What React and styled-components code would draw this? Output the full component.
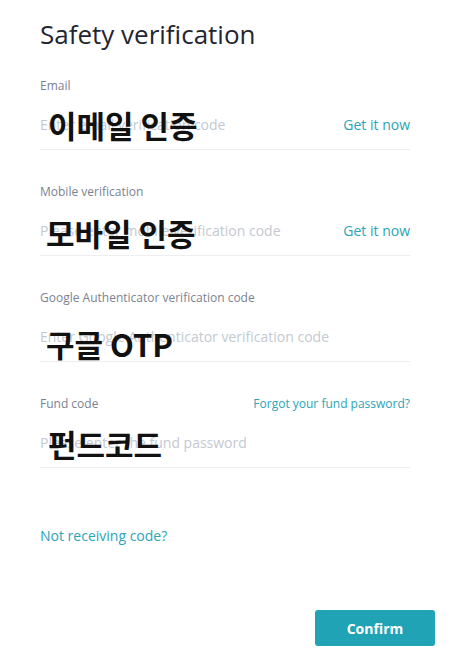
import React from "react";
import styled, { createGlobalStyle } from "styled-components";

const Global = createGlobalStyle`
  html, body { margin: 0; padding: 0; background: #fff; }
  body { font-family: "Open Sans", "Noto Sans", sans-serif; }
  * { box-sizing: border-box; }
`;

const Page = styled.div`
  width: 450px;
  height: 660px;
  display: flex;
  flex-direction: column;
  background: #fff;
`;

const Form = styled.div`
  padding: 0 40px;
  display: flex;
  flex-direction: column;
`;

const Title = styled.h1`
  margin: 18px 0 0;
  font-size: 26px;
  line-height: 32px;
  font-weight: 400;
  color: #1f2631;
`;

const Sections = styled.div`
  margin-top: 28px;
  display: flex;
  flex-direction: column;
  gap: 34px;
`;

const Section = styled.div`
  display: flex;
  flex-direction: column;
`;

const LabelRow = styled.div`
  display: flex;
  justify-content: space-between;
  align-items: center;
  height: 16px;
`;

const Label = styled.span`
  font-size: 12px;
  line-height: 16px;
  color: #7b8391;
`;

const SmallLink = styled.a`
  font-size: 12px;
  line-height: 16px;
  color: #2ba4b6;
  text-decoration: none;
  cursor: pointer;
`;

const Field = styled.div`
  position: relative;
  margin-top: 6px;
  height: 50px;
  display: flex;
  align-items: center;
  border-bottom: 1px solid #eceef1;
`;

const Input = styled.input`
  flex: 1;
  min-width: 0;
  border: none;
  outline: none;
  padding: 0;
  background: transparent;
  font-family: "Open Sans", sans-serif;
  font-size: 14px;
  line-height: 20px;
  color: #1f2631;
  &::placeholder { color: #c4c9d1; }
`;

const Action = styled.a`
  font-size: 14px;
  line-height: 20px;
  color: #2ba4b6;
  text-decoration: none;
  cursor: pointer;
  white-space: nowrap;
`;

const Overlay = styled.span`
  position: absolute;
  left: ${(p) => p.$dx}px;
  top: 50%;
  transform: translateY(calc(-50% + ${(p) => p.$dy}px));
  font-family: "Noto Sans CJK KR", "Noto Sans", sans-serif;
  font-weight: 700;
  font-size: 31px;
  line-height: 1;
  color: #111;
  white-space: nowrap;
  pointer-events: none;
`;

const Help = styled.a`
  margin-top: 58px;
  font-size: 14px;
  line-height: 20px;
  color: #2ba4b6;
  text-decoration: none;
  cursor: pointer;
`;

const Footer = styled.div`
  margin-top: 64px;
  padding: 0 15px;
  display: flex;
  justify-content: flex-end;
`;

const Button = styled.button`
  width: 120px;
  height: 36px;
  border: none;
  border-radius: 3px;
  background: #1fa3b5;
  color: #fff;
  font-family: "Open Sans", sans-serif;
  font-weight: 700;
  font-size: 14px;
  cursor: pointer;
`;

const fields = [
  { label: "Email", placeholder: "Enter email verification code", action: "Get it now", ko: "이메일 인증", dx: 8, dy: -1 },
  { label: "Mobile verification", placeholder: "Please enter mobile verification code", action: "Get it now", ko: "모바일 인증", dx: 6, dy: 1 },
  { label: "Google Authenticator verification code", placeholder: "Enter Google Authenticator verification code", ko: "구글 OTP", dx: 6, dy: 6 },
  { label: "Fund code", placeholder: "Please enter the fund password", link: "Forgot your fund password?", ko: "펀드코드", dx: 8, dy: 0 },
];

export default function App() {
  return (
    <>
      <Global />
      <Page>
        <Form>
          <Title>Safety verification</Title>
          <Sections>
            {fields.map((f) => (
              <Section key={f.label}>
                <LabelRow>
                  <Label>{f.label}</Label>
                  {f.link && <SmallLink>{f.link}</SmallLink>}
                </LabelRow>
                <Field>
                  <Input placeholder={f.placeholder} />
                  {f.action && <Action>{f.action}</Action>}
                  <Overlay $dx={f.dx} $dy={f.dy}>{f.ko}</Overlay>
                </Field>
              </Section>
            ))}
          </Sections>
          <Help>Not receiving code?</Help>
        </Form>
        <Footer>
          <Button>Confirm</Button>
        </Footer>
      </Page>
    </>
  );
}
